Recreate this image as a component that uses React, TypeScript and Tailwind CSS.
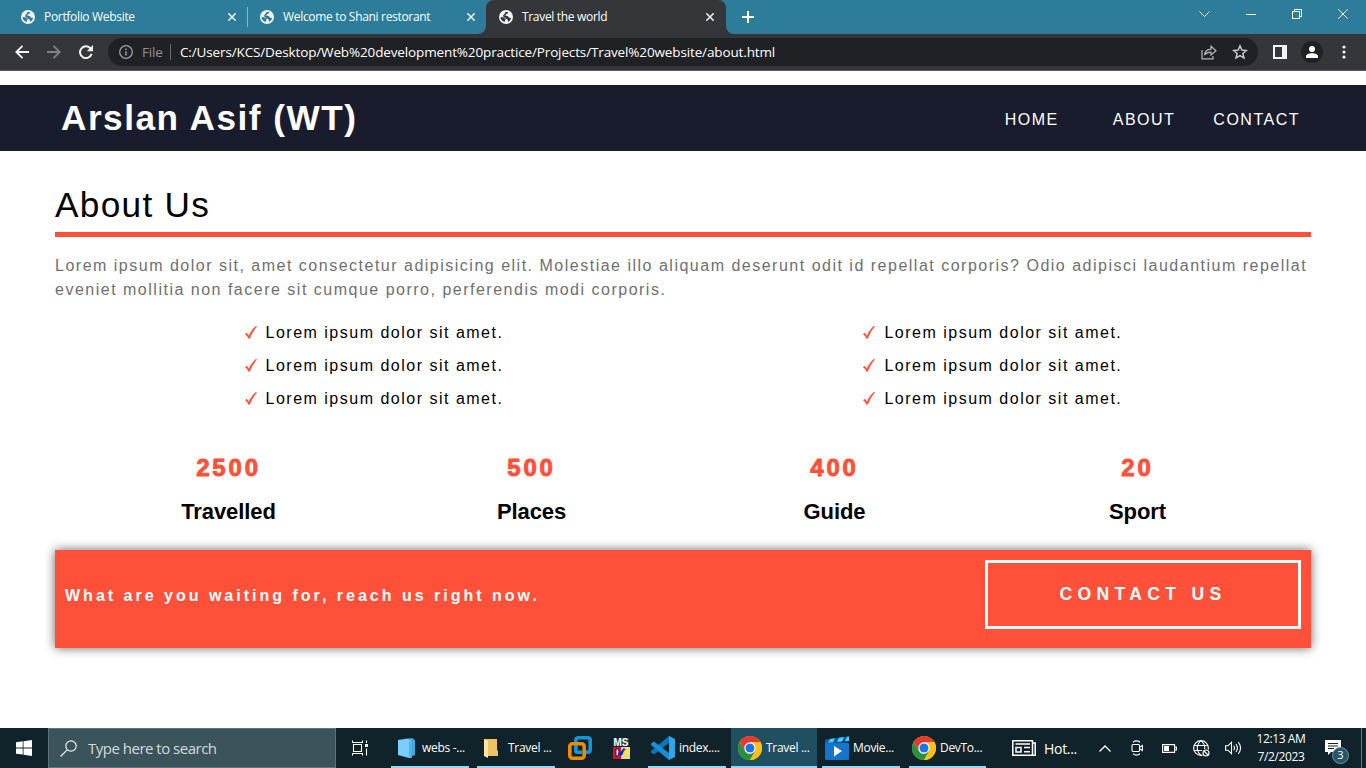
import React from 'react';

const ui = "font-['Open_Sans',sans-serif]";

function Globe({ dark = false }: { dark?: boolean }) {
  return (
    <svg viewBox="0 0 14 14" className="size-3.5 shrink-0">
      <circle cx="7" cy="7" r="7" fill="#f1f3f4" />
      <path
        d="M1.6 7.2 C3.2 6.9 4.3 7.3 5.6 8.2 C6.8 8.6 7 9.4 6 9.9 L5.8 11.9 C3.2 11.4 1.7 9.6 1.6 7.2Z M6.6 2 L9.2 2 C8.9 3.4 8.4 3.9 7.2 4 C6.9 5 6.3 5.4 5.2 5.3 C6 6 8.6 5.6 9.3 6.6 C9.4 7.4 10 8 12.1 7.9 C11.7 9.9 10.5 11.2 8.9 11.8 C9.2 10.6 8.9 9.7 7.8 9 C6.4 8.3 4.9 7.3 4 6.2 C4.2 4.9 5.5 4.3 6.6 2Z"
        fill={dark ? '#35363a' : '#2c7c9a'}
      />
    </svg>
  );
}

function Cross() {
  return (
    <svg viewBox="0 0 8 8" className="size-2 shrink-0" stroke="#f1f5f7" strokeWidth="1.5">
      <path d="M.3 .3 7.7 7.7M7.7 .3 .3 7.7" />
    </svg>
  );
}

function TabBar() {
  return (
    <div className={`flex h-[34px] bg-[#2c7c9a] text-[12px] text-white ${ui}`}>
      <div className="flex w-[247px] items-center pl-[21px] pr-[11px]">
        <Globe />
        <span className="ml-[9px] grow whitespace-nowrap tracking-[-0.32px]">Portfolio Website</span>
        <Cross />
      </div>
      <div className="mt-[7px] h-5 w-px bg-[#8bb6c6]" />
      <div className="flex w-[238px] items-center pl-[12px] pr-[11px]">
        <Globe />
        <span className="ml-[9px] grow whitespace-nowrap tracking-[-0.32px]">Welcome to Shani restorant</span>
        <Cross />
      </div>
      <div className="relative flex w-[240px] items-center rounded-t-lg bg-[#35363a] pl-[13px] pr-[12px]">
        <svg viewBox="0 0 8 8" className="absolute -left-2 bottom-0 size-2" fill="#35363a">
          <path d="M8 0V8H0A8 8 0 0 0 8 0Z" />
        </svg>
        <svg viewBox="0 0 8 8" className="absolute -right-2 bottom-0 size-2" fill="#35363a">
          <path d="M0 0V8H8A8 8 0 0 1 0 0Z" />
        </svg>
        <Globe dark />
        <span className="ml-[9px] grow whitespace-nowrap tracking-[-0.32px]">Travel the world</span>
        <Cross />
      </div>
      <svg viewBox="0 0 12 12" className="ml-4 mt-[11px] size-3" stroke="#fff" strokeWidth="2">
        <path d="M6 0V12M0 6H12" />
      </svg>
      <div className="ml-auto flex h-7 items-center pr-[18px]">
        <svg viewBox="0 0 11 6" className="mr-9 h-1.5 w-[11px]" fill="none" stroke="#fff">
          <path d="M.5 .5 5.5 5.5 10.5 .5" />
        </svg>
        <div className="mr-9 h-px w-2.5 bg-white" />
        <svg viewBox="0 0 10 10" className="mr-9 size-2.5" fill="none" stroke="#fff">
          <path d="M.5 2.5H7.5V9.5H.5ZM2.5 2.5V.5H9.5V7.5H7.5" />
        </svg>
        <svg viewBox="0 0 10 10" className="size-2.5" stroke="#fff">
          <path d="M.3 .3 9.7 9.7M9.7 .3 .3 9.7" />
        </svg>
      </div>
    </div>
  );
}

function Toolbar() {
  return (
    <div className={`flex h-[37px] items-center border-b border-[#5b5a60] bg-[#35363a] pl-[15px] ${ui}`}>
      <svg viewBox="0 0 14 14" className="size-3.5" fill="none" stroke="#f1f3f4" strokeWidth="1.9">
        <path d="M14 7H1.5M7.5 .8 1.3 7 7.5 13.2" />
      </svg>
      <svg viewBox="0 0 14 14" className="ml-[18px] size-3.5" fill="none" stroke="#808185" strokeWidth="1.9">
        <path d="M0 7H12.5M6.5 .8 12.7 7 6.5 13.2" />
      </svg>
      <svg viewBox="0 0 14 14" className="ml-[18px] size-3.5">
        <path d="M11.7 3.7A5.9 5.9 0 1 0 12.6 8.9" fill="none" stroke="#f1f3f4" strokeWidth="2" />
        <path d="M14 0V6.2H7.8Z" fill="#f1f3f4" />
      </svg>
      <div className="ml-[15px] flex h-7 w-[1150px] items-center rounded-full bg-[#202124] pl-[11px] pr-[10px] text-[14px]">
        <svg viewBox="0 0 14 14" className="size-3.5" fill="none" stroke="#9aa0a6" strokeWidth="1.3">
          <circle cx="7" cy="7" r="6.3" />
          <path d="M7 6.2V10.4M7 3.5V5" strokeWidth="1.5" />
        </svg>
        <span className="ml-[9px] w-[21px] text-[13.5px] tracking-[-0.2px] text-[#8e9297]">File</span>
        <div className="ml-[7px] h-4 w-px bg-[#6a6c70]" />
        <span className="ml-[9px] grow whitespace-nowrap text-[13.5px] tracking-[-0.135px] text-white">
          C:/Users/KCS/Desktop/Web%20development%20practice/Projects/Travel%20website/about.html
        </span>
        <svg viewBox="0 0 16 15" className="mr-[15px] h-[15px] w-4" fill="none" stroke="#b5b7ba" strokeWidth="1.2">
          <path d="M1 5V13.9H12V11M3.5 10C4 6.5 6.5 4.3 10 4.2V1.2L15 5.7 10 10V7.2C7 7.2 5 8 3.5 10Z" />
        </svg>
        <svg viewBox="0 0 16 16" className="size-4" fill="none" stroke="#c6c8cb" strokeWidth="1.5">
          <path d="M8 1.8 9.8 6.1 14.4 6.5 10.9 9.5 12 14 8 11.6 4 14 5.1 9.5 1.6 6.5 6.2 6.1Z" />
        </svg>
      </div>
      <div className="ml-[15px] h-3.5 w-3.5 border-2 border-r-[5px] border-[#f1f3f4]" />
      <div className="ml-3.5 flex size-[22px] items-center justify-center rounded-full bg-[#202124]">
        <svg viewBox="0 0 12 12" className="size-3" fill="#fff">
          <circle cx="6" cy="3" r="3" />
          <path d="M0 12V10.3C0 8.2 3 7.2 6 7.2S12 8.2 12 10.3V12Z" />
        </svg>
      </div>
      <svg viewBox="0 0 4 14" className="ml-[19px] h-3.5 w-1" fill="#f1f3f4">
        <circle cx="2" cy="2" r="1.6" />
        <circle cx="2" cy="7" r="1.6" />
        <circle cx="2" cy="12" r="1.6" />
      </svg>
    </div>
  );
}

function CheckList() {
  return (
    <ul className="flex flex-col gap-[9px]">
      {[0, 1, 2].map((i) => (
        <li key={i} className="flex h-6 items-center">
          <svg viewBox="0 0 12 13" className="-mt-0.5 mr-[9px] h-[13px] w-3" fill="#ff503a" stroke="#ff503a" strokeWidth=".4">
            <path d="M.2 8.2 1.7 7.1C2.5 7.7 3.2 8.7 3.8 10 5.5 6 8 2.6 11 .1L11.7 .6C8.9 3.8 6.6 7.7 4.8 12.3L3.6 12.6C2.7 10.6 1.7 9.1 .2 8.2Z" />
          </svg>
          <span className="whitespace-nowrap">Lorem ipsum dolor sit amet.</span>
        </li>
      ))}
    </ul>
  );
}

const stats = [
  ['2500', 'Travelled'],
  ['500', 'Places'],
  ['400', 'Guide'],
  ['20', 'Sport'],
];

function Page() {
  return (
    <main className="flex h-[657px] flex-col bg-white pt-3.5 font-['Liberation_Sans',Arial,sans-serif] text-[16px] leading-6 tracking-[1.5px] text-black">
      <header className="flex h-[66px] items-center bg-[#191c2d] pl-[61px] pr-[66px] text-white">
        <h1 className="grow text-[35.2px] font-bold">Arslan Asif (WT)</h1>
        <nav className="flex items-center pt-[3px]">
          <a className="mr-[54px]">HOME</a>
          <a className="mr-[38px]">ABOUT</a>
          <a>CONTACT</a>
        </nav>
      </header>
      <div className="px-[55px]">
        <h2 className="flex h-[86px] items-end border-b-[5px] border-[#ff503a] pb-[9px] text-[35.2px] leading-[36px] tracking-[1.3px]">About Us</h2>
        <p className="mt-[17px] text-[#6f6f6f]">
          Lorem ipsum dolor sit, amet consectetur adipisicing elit. Molestiae illo aliquam deserunt odit id repellat corporis? Odio adipisci laudantium repellat eveniet mollitia non facere sit cumque porro, perferendis modi corporis.
        </p>
        <div className="mt-[19px] flex gap-[360px] pl-[189.5px]">
          <CheckList />
          <CheckList />
        </div>
        <div className="mt-[41px] grid grid-cols-4 px-[22px] text-center">
          {stats.map(([n, label]) => (
            <div key={label} className="flex flex-col">
              <span className="text-[24px] font-bold leading-[32px] tracking-[2.8px] text-[#ff503a] [-webkit-text-stroke:0.9px_#ff503a]">{n}</span>
              <span className="mt-[13px] text-[22px] font-bold leading-[30px] tracking-[-0.1px]">{label}</span>
            </div>
          ))}
        </div>
        <div className="mt-[23px] flex h-[98px] items-start bg-[#ff503a] p-2.5 font-bold text-white shadow-[0_0_10px_rgba(0,0,0,0.6)]">
          <p className="grow pt-[24px] tracking-[3px]">What are you waiting for, reach us right now.</p>
          <button className="flex h-[69px] w-[316px] items-center justify-center border-[3px] border-white pb-0.5 text-[17.6px] font-bold tracking-[5.28px]">
            CONTACT US
          </button>
        </div>
      </div>
    </main>
  );
}

function Chrome() {
  return (
    <svg viewBox="0 0 24 24" className="size-6 shrink-0">
      <circle cx="12" cy="12" r="12" fill="#fbc116" />
      <path d="M12 12 6.8 15 1.6 6A12 12 0 0 1 22.4 6H12Z" fill="#e33b2e" />
      <path d="M1.6 6 6.8 15A6 6 0 0 0 12 18L17.2 15 12 24A12 12 0 0 1 1.6 6Z" fill="#229342" />
      <path d="M12 6H22.4A12 12 0 0 1 12 24L17.2 15A6 6 0 0 0 12 6Z" fill="#fbc116" />
      <circle cx="12" cy="12" r="5.7" fill="#fff" />
      <circle cx="12" cy="12" r="4.5" fill="#1a73e8" />
    </svg>
  );
}

function Task({ box, icon, label }: { box: string; icon: React.ReactNode; label: string }) {
  return (
    <div className={`flex h-10 items-center border-b-2 border-[#8fd8f8] pt-0.5 ${box}`}>
      {icon}
      <span className="-mt-px whitespace-nowrap">{label}</span>
    </div>
  );
}

function Taskbar() {
  return (
    <footer className={`flex h-10 items-center overflow-hidden bg-[#10232b] text-[12px] tracking-[-0.3px] text-white ${ui}`}>
      <svg viewBox="0 0 16 16" className="ml-4 size-4" fill="#fff">
        <path d="M0 2.3 6.7 1.3V7.5H0ZM7.5 1.2 16 0V7.5H7.5ZM0 8.4H6.7V14.6L0 13.7ZM7.5 8.4H16V16L7.5 14.8Z" />
      </svg>
      <div className="ml-4 flex h-10 w-[288px] items-center border border-[#5f747a] bg-[#3b535b] pl-[11px]">
        <svg viewBox="0 0 17 17" className="size-[17px]" fill="none" stroke="#eef2f3" strokeWidth="1.2">
          <circle cx="11" cy="6" r="5.2" />
          <path d="M7.2 9.8.5 16.5" />
        </svg>
        <span className="ml-[11px] text-[15px] tracking-[-0.5px] text-[#d5dcde]">Type here to search</span>
      </div>
      <svg viewBox="0 0 16 16" className="ml-4 size-4" fill="none" stroke="#fff" strokeWidth="1.1">
        <path d="M.5 .5V2.5H10.5V.5M.5 15.5V13.5H10.5V15.5M1.5 4.5H9.5V11.5H1.5ZM14.5 .5V3M14.5 8.5V15.5" />
        <path d="M13 4H16V7H13Z" fill="#fff" stroke="none" />
      </svg>
      <Task
        box="ml-[23px] w-[78px] pl-[7px]"
        label="webs -..."
        icon={
          <svg viewBox="0 0 17 20" className="mr-[7px] h-5 w-[17px] shrink-0">
            <path d="M6 1 14 0 17 2V17L13 18.5Z" fill="#43a6df" />
            <path d="M0 2 9 .8 14 3V19.5L11 20 0 17Z" fill="#79cffa" />
            <path d="M11 4 14 3V19.5L11 20Z" fill="#4db5ee" />
          </svg>
        }
      />
      <Task
        box="ml-2 w-[78px] pl-[7px]"
        label="Travel ..."
        icon={
          <svg viewBox="0 0 14 20" className="mr-[10px] h-5 w-3.5 shrink-0">
            <path d="M0 1H13V12L14 13V18H0Z" fill="#efc265" />
            <path d="M0 1 4 3V20L0 18Z" fill="#ffe6a1" />
          </svg>
        }
      />
      <svg viewBox="0 0 24 24" className="ml-[13px] size-6 shrink-0" fill="none" strokeWidth="3.6">
        <path d="M7.8 12V4.5Q7.8 1.8 10.5 1.8H19.5Q22.2 1.8 22.2 4.5V13.5Q22.2 16.2 19.5 16.2H17" stroke="#1696d8" />
        <rect x="1.8" y="7.8" width="14.4" height="14.4" rx="2.7" stroke="#f38b00" />
        <path d="M7.8 9.6V14.5Q7.8 16.2 10 16.2H14.4" stroke="#1696d8" />
      </svg>
      <svg viewBox="0 0 18 21" className="ml-[21px] h-[21px] w-[18px] shrink-0">
        <path d="M0 0H16V8H0Z" fill="#333" />
        <text x="0.5" y="7.6" fontSize="10" fontWeight="700" fill="#fff" fontFamily="Liberation Sans" letterSpacing="0">MS</text>
        <path d="M0 9H8V21H0Z" fill="#e31018" />
        <path d="M8 9H17V21H8Z" fill="#ded6dc" />
        <path d="M3 11H5Q7 13 5 18H3Z" fill="#fff" stroke="#0a1688" />
        <path d="M7 17 12 11" stroke="#1426b4" strokeWidth="3" />
        <path d="M16.5 13.5A3 3 0 1 0 16.5 17.5" fill="none" stroke="#ffe400" strokeWidth="2.4" />
      </svg>
      <Task
        box="ml-[17px] w-[78px] pl-[3px]"
        label="index...."
        icon={
          <svg viewBox="0 0 24 24" className="mr-1 size-6 shrink-0">
            <path d="M18 0 24 3V21L18 24Z" fill="#2ca7ee" />
            <path d="M18 0V7L3 18.5 0 16.5V15Z" fill="#0b76bd" />
            <path d="M18 24V17L3 5.5 0 7.5V9Z" fill="#168fd8" />
          </svg>
        }
      />
      <Task box="ml-[5px] w-[86px] bg-[#1f4f61] pl-[7px]" label="Travel ..." icon={<div className="mr-1"><Chrome /></div>} />
      <Task
        box="ml-[5px] w-[78px] pl-[3px]"
        label="Movie..."
        icon={
          <svg viewBox="0 0 24 24" className="mr-1 size-6 shrink-0">
            <path d="M0 3.5 23.5 .5 24 5 6 7H0Z" fill="#0b5cab" />
            <path d="M5 3 10 2.3 8 6.5 3 7ZM14 1.8 19 1.1 17 5.5 12 6.1ZM22 .8 24 .5V5L20 5.3Z" fill="#42d3f8" />
            <rect y="6.5" width="24" height="17.5" rx="1.5" fill="#1574cb" />
            <path d="M9 10 17 15 9 20.5Z" fill="#fff" />
          </svg>
        }
      />
      <Task box="ml-[9px] w-[77px] pl-[3px]" label="DevTo..." icon={<div className="mr-1"><Chrome /></div>} />
      <svg viewBox="0 0 24 16" className="ml-[26px] h-4 w-6 shrink-0" fill="none" stroke="#fff" strokeWidth="1.5">
        <path d="M.8 .8H20.5V15.2H.8ZM20.5 3H23.2V15.2H20M4 7.5H9V12H4ZM3.5 4H18M12 7.5H18M12 11.8H18" />
      </svg>
      <span className="ml-2 w-[33px] whitespace-nowrap pt-px text-[14px]">Hot...</span>
      <svg viewBox="0 0 12 7" className="ml-[22px] h-[7px] w-3 shrink-0" fill="none" stroke="#fff" strokeWidth="1.3">
        <path d="M.5 6.5 6 1 11.5 6.5" />
      </svg>
      <svg viewBox="0 0 12 16" className="ml-[20px] h-4 w-3 shrink-0" fill="none" stroke="#fff" strokeWidth="1.1">
        <rect x="1" y="4.5" width="7.5" height="7" rx="1" />
        <path d="M8.5 7.2 11.4 5.5V10.5L8.5 8.8M2 2.2Q5.5-.5 9 2.2M2 13.8Q5.5 16.5 9 13.8" />
      </svg>
      <svg viewBox="0 0 15 9" className="ml-[19px] h-[9px] w-[15px] shrink-0">
        <path d="M.6 .6H12.6V8.4H.6ZM13 3H14.4V6H13" fill="none" stroke="#fff" strokeWidth="1.1" />
        <path d="M2 2H7V7H2Z" fill="#fff" />
      </svg>
      <svg viewBox="0 0 17 17" className="ml-[16px] size-[17px] shrink-0" fill="none" stroke="#fff" strokeWidth="1.1">
        <circle cx="8" cy="8" r="7.4" />
        <path d="M8 .6C3 5 3 11 8 15.4M8 .6C11 3 12 6 11.7 9M1 5.5H15M1 10.5H9" />
        <circle cx="13" cy="13" r="4.2" fill="#10232b" stroke="none" />
        <circle cx="13" cy="13" r="3" />
        <path d="M11 11 15 15" />
      </svg>
      <svg viewBox="0 0 17 14" className="ml-[15px] h-3.5 w-[17px] shrink-0" fill="none" stroke="#fff" strokeWidth="1.1">
        <path d="M.6 4.8H3L6.5 1.3V12.7L3 9.2H.6ZM8.7 4.8Q10.3 7 8.7 9.2M11 3Q13.8 7 11 11M13.3 1Q17.8 7 13.3 13" />
      </svg>
      <div className="ml-[13px] flex w-[52px] shrink-0 flex-col items-center whitespace-nowrap leading-[18px] tracking-[-0.4px]">
        <span>12:13 AM</span>
        <span>7/2/2023</span>
      </div>
      <div className="relative ml-[18px] h-6 w-6 shrink-0">
        <svg viewBox="0 0 16 16" className="mt-1 size-4">
          <path d="M0 0H16V12H6L3 15V12H0Z" fill="#fff" />
          <path d="M3 3.5H13M3 6H13M3 8.5H9" stroke="#10232b" />
        </svg>
        <span className="absolute left-[7px] top-[11px] flex size-[17px] items-center justify-center rounded-full border border-[#6b98a8] bg-[#25566a] text-[11px] tracking-normal">3</span>
      </div>
      <div className="ml-auto mr-1 h-10 w-px bg-[#68777d]" />
    </footer>
  );
}

export default function App() {
  return (
    <div className="flex h-screen w-full flex-col overflow-hidden bg-white">
      <TabBar />
      <Toolbar />
      <Page />
      <Taskbar />
    </div>
  );
}
